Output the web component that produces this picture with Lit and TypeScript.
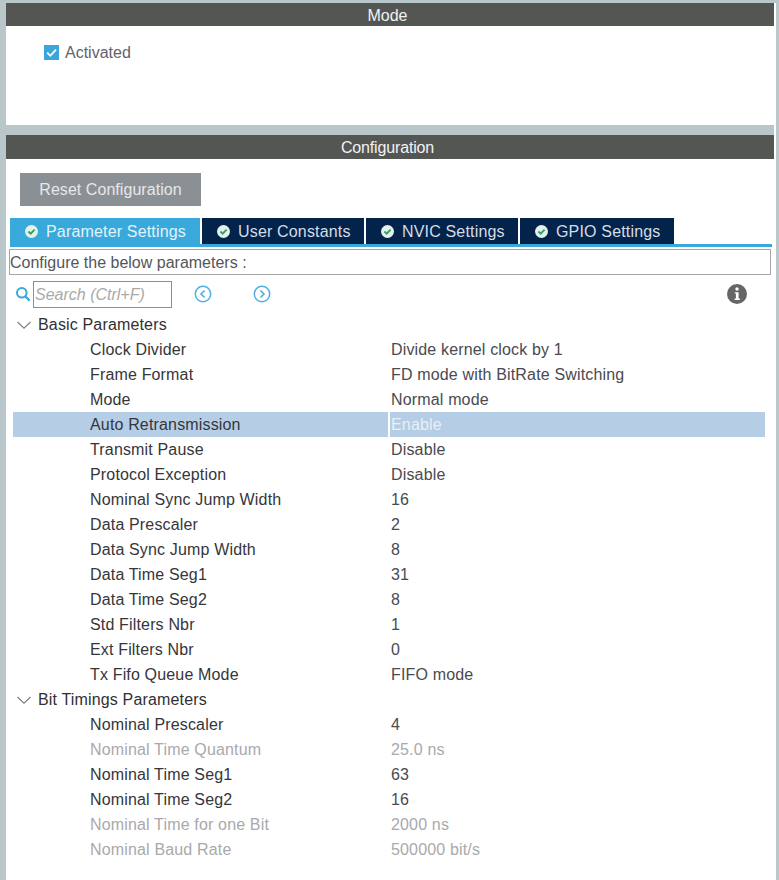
import { LitElement, html, css, svg } from "lit";
import { customElement } from "lit/decorators.js";

type Row = { k: string; v: string; off?: boolean; sel?: boolean };
const basic: Row[] = [
  { k: "Clock Divider", v: "Divide kernel clock by 1" },
  { k: "Frame Format", v: "FD mode with BitRate Switching" },
  { k: "Mode", v: "Normal mode" },
  { k: "Auto Retransmission", v: "Enable", sel: true },
  { k: "Transmit Pause", v: "Disable" },
  { k: "Protocol Exception", v: "Disable" },
  { k: "Nominal Sync Jump Width", v: "16" },
  { k: "Data Prescaler", v: "2" },
  { k: "Data Sync Jump Width", v: "8" },
  { k: "Data Time Seg1", v: "31" },
  { k: "Data Time Seg2", v: "8" },
  { k: "Std Filters Nbr", v: "1" },
  { k: "Ext Filters Nbr", v: "0" },
  { k: "Tx Fifo Queue Mode", v: "FIFO mode" },
];
const timing: Row[] = [
  { k: "Nominal Prescaler", v: "4" },
  { k: "Nominal Time Quantum", v: "25.0 ns", off: true },
  { k: "Nominal Time Seg1", v: "63" },
  { k: "Nominal Time Seg2", v: "16" },
  { k: "Nominal Time for one Bit", v: "2000 ns", off: true },
  { k: "Nominal Baud Rate", v: "500000 bit/s", off: true },
];
const tabs = ["Parameter Settings", "User Constants", "NVIC Settings", "GPIO Settings"];

const chev = svg`<svg class="chev" width="16" height="10" viewBox="0 0 16 10"><path d="M1.5 2 L8 8.2 L14.5 2" fill="none" stroke="#7d8285" stroke-width="1.2"/></svg>`;
const ok = svg`<svg class="ok" width="15" height="15" viewBox="0 0 15 15"><circle cx="7.5" cy="7.5" r="6.5" fill="#e4f3ea"/><path d="M4.4 7.5 L6.7 9.7 L10.6 5.6" fill="none" stroke="#3a9c74" stroke-width="1.9"/></svg>`;

@customElement("app-root")
export class AppRoot extends LitElement {
  static styles = css`
    :host { display: block; width: 779px; height: 880px; background: #b9c6ca; overflow: hidden;
      font-family: "Liberation Sans", Arial, sans-serif; font-size: 16px; color: #3c3c40; }
    .page { height: 877px; padding: 3px 3px 0 6px; display: flex; flex-direction: column; }
    .inner { flex: 1; background: #fff; padding-right: 2px; display: flex; flex-direction: column; }
    .head { height: 23px; background: #545654; color: #f2f2f2; text-align: center; line-height: 25px; flex: none; padding-right: 5px; }
    .head.cfg { height: 24px; line-height: 25px; letter-spacing: -0.15px; }
    .mode { height: 99px; background: #fff; flex: none; padding: 17px 0 0 38px; box-sizing: border-box; }
    .check { display: flex; align-items: center; gap: 6px; color: #63636a; height: 18px; }
    .check span.lbl { padding-top: 2px; }
    .box { width: 15px; height: 15px; background: #3aa6dd; display: flex; }
    .gap { height: 10px; flex: none; background: #b9c6ca; }
    .cfgbody { flex: 1; background: #fff; display: flex; flex-direction: column; padding-top: 14px; }
    .reset { margin-left: 14px; width: 181px; height: 33px; background: #8b9094; color: #e6e8ea;
      display: flex; align-items: center; justify-content: center; letter-spacing: 0.05px; flex: none; box-sizing: border-box; }
    .tabs { display: flex; gap: 2px; margin: 12px 0 0 4px; height: 26px; flex: none; }
    .tab { background: #03234b; color: #d5dde6; display: flex; align-items: center; gap: 7px; padding-left: 14px; box-sizing: border-box; letter-spacing: 0.17px; }
    .tab span { padding-top: 1px; }
    .tab.on { background: #39a9dc; color: #e3f3fa; }
    .line { height: 3px; background: #39a9dc; margin: 0 2px 0 4px; flex: none; }
    .desc { margin: 2px 3px 0 3px; height: 26px; border: 1px solid #a5a5a5; box-sizing: border-box; color: #55555a; line-height: 26px; flex: none; }
    .tools { display: flex; align-items: center; height: 28px; margin-top: 5px; padding-left: 9px; flex: none; }
    .search { width: 139px; height: 27px; margin-left: 2px; border: 1px solid #8e8e8e; box-sizing: border-box; color: #a9a9a9; font-style: italic; line-height: 26px; padding-left: 1px; }
    .nav1 { margin-left: 22px; }
    .nav2 { margin-left: 41px; }
    .info { margin-left: auto; margin-right: 27px; }
    .tree { margin-top: 4px; padding-left: 7px; letter-spacing: 0.16px; }
    .row { display: flex; height: 25px; line-height: 26px; margin-right: 9px; white-space: nowrap; }
    .group { display: flex; align-items: center; height: 25px; line-height: 26px; color: #303034; padding-left: 3px; }
    .chev { margin-right: 6px; }
    .k { width: 376px; padding-left: 77px; box-sizing: border-box; flex: none; color: #36363a; }
    .v { padding-left: 2px; color: #4a4a50; flex: 1; }
    .row.sel { background: #b5cde5; }
    .row.sel .v { color: #e9eff6; border-left: 2px solid #fff; padding-left: 1px; margin-left: -1px; }
    .row.off .k, .row.off .v { color: #a9a9ab; }
  `;

  rows(list: Row[]) {
    return list.map(
      (r) => html`<div class="row ${r.sel ? "sel" : ""} ${r.off ? "off" : ""}">
        <div class="k">${r.k}</div><div class="v">${r.v}</div>
      </div>`
    );
  }

  render() {
    const widths = [190, 162, 152, 154];
    return html`<div class="page"><div class="inner">
      <div class="head">Mode</div>
      <div class="mode">
        <div class="check">
          <span class="box"><svg width="15" height="15" viewBox="0 0 15 15"><path d="M3.2 7.6 L6.3 10.8 L12 4.6" fill="none" stroke="#fff" stroke-width="1.8"/></svg></span>
          <span class="lbl">Activated</span>
        </div>
      </div>
      <div class="gap"></div>
      <div class="head cfg">Configuration</div>
      <div class="cfgbody">
        <div class="reset">Reset Configuration</div>
        <div class="tabs">
          ${tabs.map((t, i) => html`<div class="tab ${i === 0 ? "on" : ""}" style="width:${widths[i]}px">${ok}<span>${t}</span></div>`)}
        </div>
        <div class="line"></div>
        <div class="desc">Configure the below parameters :</div>
        <div class="tools">
          <svg width="16" height="16" viewBox="0 0 16 16"><circle cx="6.8" cy="6.8" r="4.8" fill="none" stroke="#3aa6dd" stroke-width="2"/><path d="M10.4 10.4 L14.6 14.6" stroke="#3aa6dd" stroke-width="2.2"/></svg>
          <div class="search">Search (Ctrl+F)</div>
          <svg class="nav1" width="18" height="18" viewBox="0 0 18 18"><circle cx="9" cy="9" r="7.7" fill="none" stroke="#4fb0e0" stroke-width="1.5"/><path d="M10.6 5.5 L7 9 L10.6 12.5" fill="none" stroke="#4fb0e0" stroke-width="1.6"/></svg>
          <svg class="nav2" width="18" height="18" viewBox="0 0 18 18"><circle cx="9" cy="9" r="7.7" fill="none" stroke="#4fb0e0" stroke-width="1.5"/><path d="M7.4 5.5 L11 9 L7.4 12.5" fill="none" stroke="#4fb0e0" stroke-width="1.6"/></svg>
          <svg class="info" width="20" height="20" viewBox="0 0 20 20"><circle cx="10" cy="10" r="10" fill="#666"/><circle cx="10" cy="5" r="1.7" fill="#fff"/><path d="M7.8 8.2 H11.6 V14.6 H12.8 V16 H7.6 V14.6 H8.9 V9.6 H7.8 Z" fill="#fff"/></svg>
        </div>
        <div class="tree">
          <div class="group">${chev}Basic Parameters</div>
          ${this.rows(basic)}
          <div class="group">${chev}Bit Timings Parameters</div>
          ${this.rows(timing)}
        </div>
      </div>
    </div></div>`;
  }
}
